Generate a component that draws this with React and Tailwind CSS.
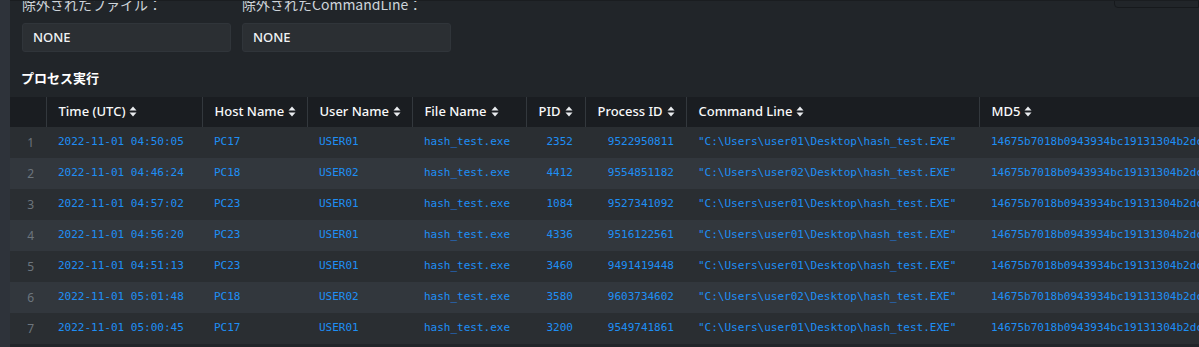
import React from "react";

const rows = [
  ["2022-11-01 04:50:05", "PC17", "USER01", "hash_test.exe", "2352", "9522950811", "user01"],
  ["2022-11-01 04:46:24", "PC18", "USER02", "hash_test.exe", "4412", "9554851182", "user02"],
  ["2022-11-01 04:57:02", "PC23", "USER01", "hash_test.exe", "1084", "9527341092", "user01"],
  ["2022-11-01 04:56:20", "PC23", "USER01", "hash_test.exe", "4336", "9516122561", "user01"],
  ["2022-11-01 04:51:13", "PC23", "USER01", "hash_test.exe", "3460", "9491419448", "user01"],
  ["2022-11-01 05:01:48", "PC18", "USER02", "hash_test.exe", "3580", "9603734602", "user02"],
  ["2022-11-01 05:00:45", "PC17", "USER01", "hash_test.exe", "3200", "9549741861", "user01"],
];

const cols = [
  { label: "", w: "w-[36px]" },
  { label: "Time (UTC)", w: "w-[156px]" },
  { label: "Host Name", w: "w-[105px]" },
  { label: "User Name", w: "w-[105px]" },
  { label: "File Name", w: "w-[114px]" },
  { label: "PID", w: "w-[59px]", right: true },
  { label: "Process ID", w: "w-[101px]", right: true },
  { label: "Command Line", w: "w-[293px]" },
  { label: "MD5", w: "w-[300px]" },
];

const SortIcon = () => (
  <svg width="8" height="11" viewBox="0 0 8 11" className="inline-block ml-[4px] -mt-[2px]">
    <path d="M4 0.5 L7.5 4.5 L0.5 4.5 Z" fill="#e9ecef" />
    <path d="M4 10.5 L7.5 6.5 L0.5 6.5 Z" fill="#e9ecef" />
  </svg>
);

const App = () => {
  return (
    <div className="flex w-[1199px] h-[347px] overflow-hidden bg-[#2d3238]" style={{ fontFamily: '"Noto Sans", "Noto Sans CJK JP", sans-serif' }}>
      {/* left strip */}
      <div className="w-[10px] shrink-0 bg-[#2e333a]" />

      {/* Main Content */}
      <div className="relative flex-1 bg-[#212529] border-t border-[#1a1d20] overflow-hidden">
        <div className="absolute right-0 top-[-4px] w-[85px] h-[11px] rounded-bl-[4px] border border-[#16191c]" />

        <div className="flex gap-[11px] pl-[12px] -mt-[7px]">
          <div className="flex flex-col">
            <span className="text-[14px] leading-[20px] text-[#ced4da]" style={{ fontFamily: '"Noto Sans CJK JP", sans-serif' }}>除外されたファイル：</span>
            <div className="mt-[9px] w-[209px] h-[29px] rounded-[3px] bg-[#2b2f33] border border-[#30353a] flex items-center pl-[10px] text-[13px] font-medium text-[#f1f3f5]">
              NONE
            </div>
          </div>
          <div className="flex flex-col">
            <span className="text-[14px] leading-[20px] text-[#ced4da]" style={{ fontFamily: '"Noto Sans CJK JP", sans-serif' }}>除外されたCommandLine：</span>
            <div className="mt-[9px] w-[209px] h-[29px] rounded-[3px] bg-[#2b2f33] border border-[#30353a] flex items-center pl-[10px] text-[13px] font-medium text-[#f1f3f5]">
              NONE
            </div>
          </div>
        </div>

        <h5 className="mt-[17px] pl-[11px] text-[13px] leading-[18px] font-bold text-white" style={{ fontFamily: '"Noto Sans CJK JP", sans-serif' }}>
          プロセス実行
        </h5>

        <table className="mt-[10px] table-fixed border-collapse w-[1269px]">
          <thead>
            <tr className="h-[30px] bg-[#1a1d21]">
              {cols.map((c, i) => (
                <th
                  key={i}
                  className={`${c.w} px-[12px] text-[13px] font-medium text-[#f8f9fa] whitespace-nowrap ${c.right ? "text-right" : "text-left"} ${i < cols.length - 1 ? "border-r border-[#33383d]" : ""}`}
                >
                  {c.label}
                  {c.label && <SortIcon />}
                </th>
              ))}
            </tr>
          </thead>
          <tbody>
            {rows.map((r, i) => (
              <tr key={i} className={`h-[31px] ${i % 2 === 0 ? "bg-[#2a2e32]" : "bg-[#32373d]"}`}>
                <td className="pr-[12px] text-right text-[12px] text-[#6c757d]">{i + 1}</td>
                {[r[0], r[1], r[2], r[3], r[4], r[5], `"C:\\Users\\${r[6]}\\Desktop\\hash_test.EXE"`, "14675b7018b0943934bc19131304b2dc"].map((v, j) => (
                  <td
                    key={j}
                    className={`px-[12px] text-[11px] text-[#1e8ff5] whitespace-nowrap overflow-hidden ${j === 4 || j === 5 ? "text-right" : "text-left"}`}
                    style={{ fontFamily: '"DejaVu Sans Mono", monospace' }}
                  >
                    {v}
                  </td>
                ))}
              </tr>
            ))}
          </tbody>
        </table>
      </div>
    </div>
  );
};

export default App;
